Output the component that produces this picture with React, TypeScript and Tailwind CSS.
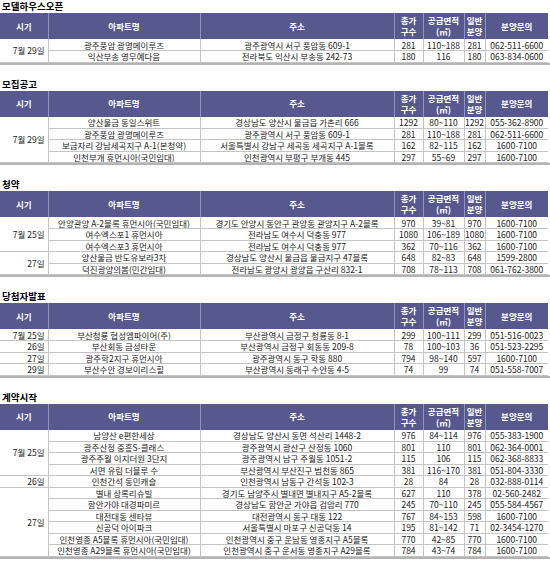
import React from 'react'

type Group = { date: string; rows: string[] }
type Section = { title: string; groups: Group[] }

const sections: Section[] = [
  {
    title: '모델하우스오픈',
    groups: [
      { date: '7월 29일', rows: [
        '광주풍암 광명메이루즈|광주광역시 서구 풍암동 609-1|281|110~188|281|062-511-6600',
        '익산부송 영무예다음|전라북도 익산시 부송동 242-73|180|116|180|063-834-0600',
      ] },
    ],
  },
  {
    title: '모집공고',
    groups: [
      { date: '7월 29일', rows: [
        '양산물금 동일스위트|경상남도 양산시 물금읍 가촌리 666|1292|80~110|1292|055-362-8900',
        '광주풍암 광명메이루즈|광주광역시 서구 풍암동 609-1|281|110~188|281|062-511-6600',
        '보금자리 강남세곡지구 A-1(본청약)|서울특별시 강남구 세곡동 세곡지구 A-1블록|162|82~115|162|1600-7100',
        '인천부개 휴먼시아(국민임대)|인천광역시 부평구 부개동 445|297|55~69|297|1600-7100',
      ] },
    ],
  },
  {
    title: '청약',
    groups: [
      { date: '7월 25일', rows: [
        '안양관양 A-2블록 휴먼시아(국민임대)|경기도 안양시 동안구 관양동 관양지구 A-2블록|970|39~81|970|1600-7100',
        '여수엑스포1 휴먼시아|전라남도 여수시 덕충동 977|1080|106~189|1080|1600-7100',
        '여수엑스포3 휴먼시아|전라남도 여수시 덕충동 977|362|70~116|362|1600-7100',
      ] },
      { date: '27일', rows: [
        '양산물금 반도유보라3차|경상남도 양산시 물금읍 물금지구 47블록|648|82~83|648|1599-2800',
        '덕진광양의봄(민간임대)|전라남도 광양시 광양읍 구산리 832-1|708|78~113|708|061-762-3800',
      ] },
    ],
  },
  {
    title: '당첨자발표',
    groups: [
      { date: '7월 25일', rows: ['부산청룡 협성엠파이어(주)|부산광역시 금정구 청룡동 8-1|299|100~111|299|051-516-0023'] },
      { date: '26일', rows: ['부산회동 금성타운|부산광역시 금정구 회동동 209-8|78|100~103|36|051-523-2295'] },
      { date: '27일', rows: ['광주학2지구 휴먼시아|광주광역시 동구 학동 880|794|98~140|597|1600-7100'] },
      { date: '29일', rows: ['부산수안 경보이리스힐|부산광역시 동래구 수안동 4-5|74|99|74|051-558-7007'] },
    ],
  },
  {
    title: '계약시작',
    groups: [
      { date: '7월 25일', rows: [
        '남양산 e편한세상|경상남도 양산시 동면 석산리 1448-2|976|84~114|976|055-383-1900',
        '광주산정 중흥S-클래스|광주광역시 광산구 산정동 1060|801|110|801|062-364-0001',
        '광주주월 이지더원 3단지|광주광역시 남구 주월동 1051-2|115|106|115|062-368-8833',
        '서면 유림 더블루 수|부산광역시 부산진구 범천동 865|381|116~170|381|051-804-3330',
      ] },
      { date: '26일', rows: ['인천간석 동민캐슬|인천광역시 남동구 간석동 102-3|28|84|28|032-888-0114'] },
      { date: '27일', rows: [
        '별내 상록리슈빌|경기도 남양주시 별내면 별내지구 A5-2블록|627|110|378|02-560-2482',
        '함안가야 대경파미르|경상남도 함안군 가야읍 검암리 770|245|70~110|245|055-584-4567',
        '대전대동 센타뷰|대전광역시 동구 대동 122|767|84~153|598|1600-7100',
        '신공덕 아이파크|서울특별시 마포구 신공덕동 14|195|81~142|71|02-3454-1270',
        '인천영종 A5블록 휴먼시아(국민임대)|인천광역시 중구 운남동 영종지구 A5블록|770|42~85|770|1600-7100',
        '인천영종 A29블록 휴먼시아(국민임대)|인천광역시 중구 운서동 영종지구 A29블록|784|43~74|784|1600-7100',
      ] },
    ],
  },
]

const th = "border-r border-[#9293bb] font-bold text-white text-[8.5px] leading-[11px] text-center align-middle p-0"
const td = "border-r border-b border-[#c4c4c4] text-center align-middle whitespace-nowrap overflow-hidden p-0"

function Table({ s }: { s: Section }) {
  return (
    <div className="border-b-2 border-[#b4b4b4]">
      <table className="w-[548px] table-fixed border-collapse">
        <colgroup>
          <col className="w-[48px]" />
          <col className="w-[152px]" />
          <col className="w-[194px]" />
          <col className="w-[29px]" />
          <col className="w-[41px]" />
          <col className="w-[21px]" />
          <col className="w-[63px]" />
        </colgroup>
        <thead>
          <tr className="h-[26px] bg-[#57588e]">
            <th className={th}>시기</th>
            <th className={th}>아파트명</th>
            <th className={th}>주소</th>
            <th className={th}>총가<br />구수</th>
            <th className={th}>공급면적<br />(㎡)</th>
            <th className={th}>일반<br />분양</th>
            <th className={`${th} border-r-0`}>분양문의</th>
          </tr>
        </thead>
        <tbody>
          {s.groups.map(g =>
            g.rows.map((r, i) => {
              const c = r.split('|')
              return (
                <tr key={g.date + i} className="h-[11.5px] text-[8.5px] leading-[10px] text-[#222]">
                  {i === 0 && (
                    <td rowSpan={g.rows.length} className={`${td} text-right pr-[3px]`}>{g.date}</td>
                  )}
                  <td className={td}>{c[0]}</td>
                  <td className={td}>{c[1]}</td>
                  <td className={td}>{c[2]}</td>
                  <td className={td}>{c[3]}</td>
                  <td className={td}>{c[4]}</td>
                  <td className={`${td} border-r-0`}>{c[5]}</td>
                </tr>
              )
            })
          )}
        </tbody>
      </table>
    </div>
  )
}

export default function App() {
  return (
    <div className="w-[550px] h-[563px] overflow-hidden bg-white font-['Noto_Sans_CJK_KR',sans-serif]">
      {sections.map((s, i) => (
        <div key={s.title} className={i === 0 ? '' : 'mt-[13px]'}>
          <div className="h-[13px] pl-[2px] text-[9.5px] leading-[12px] font-bold text-black">{s.title}</div>
          <Table s={s} />
        </div>
      ))}
    </div>
  )
}
